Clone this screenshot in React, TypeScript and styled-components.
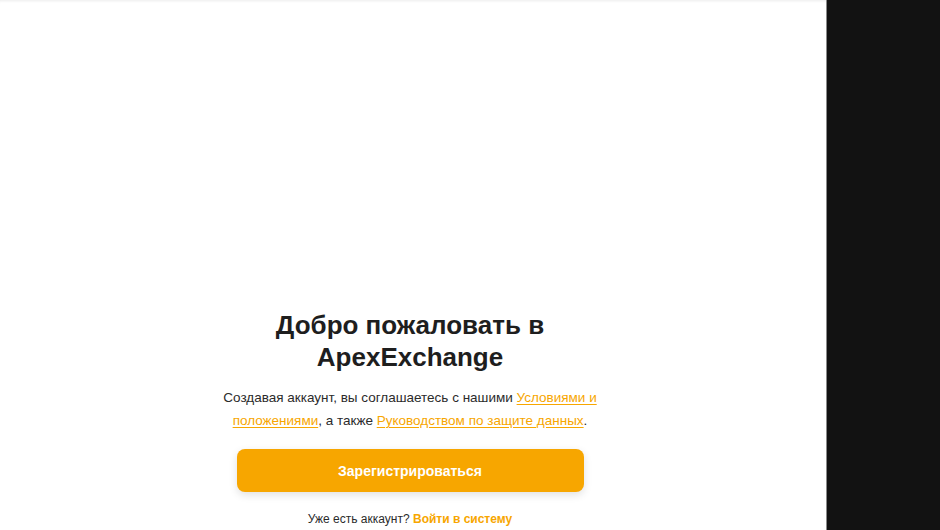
import React from 'react';
import styled, { createGlobalStyle } from 'styled-components';

const GlobalStyle = createGlobalStyle`
  html, body {
    margin: 0;
    padding: 0;
    height: 100%;
    background: #ffffff;
  }
  #root {
    height: 100%;
  }
  * {
    box-sizing: border-box;
  }
`;

const Page = styled.div`
  display: flex;
  width: 940px;
  height: 530px;
  overflow: hidden;
  font-family: "Liberation Sans", Arial, sans-serif;
`;

const Main = styled.div`
  flex: 0 0 826px;
  display: flex;
  flex-direction: column;
  align-items: center;
  padding: 309px 6px 0 0;
  background: #ffffff;
  box-shadow: inset 0 3px 3px -2px rgba(0, 0, 0, 0.08);
`;

const Side = styled.div`
  flex: 1;
  background: #121212;
  border-left: 1px solid #8a8a8a;
`;

const Content = styled.div`
  width: 384px;
  display: flex;
  flex-direction: column;
  align-items: center;
  text-align: center;
`;

const Title = styled.h1`
  margin: 0;
  font-size: 26px;
  line-height: 32px;
  font-weight: 700;
  color: #1e1e1e;
  width: 300px;
`;

const Terms = styled.p`
  margin: 13px 0 0;
  font-size: 13.5px;
  line-height: 23px;
  color: #2b2b2b;
`;

const TermsLink = styled.a`
  color: #f7a600;
  text-decoration: underline;
  text-underline-offset: 2px;
`;

const PrimaryButton = styled.button`
  margin-top: 17px;
  width: 347px;
  height: 43px;
  border: none;
  border-radius: 8px;
  background: #f7a600;
  color: #ffffff;
  font-family: inherit;
  font-size: 14px;
  font-weight: 700;
  box-shadow: 0 3px 8px rgba(0, 0, 0, 0.12);
  cursor: pointer;
`;

const Footer = styled.div`
  margin-top: 18px;
  font-size: 12px;
  line-height: 18px;
  color: #2b2b2b;
`;

const FooterLink = styled.a`
  color: #f7a600;
  font-weight: 700;
  text-decoration: none;
`;

export default function App() {
  return (
    <>
      <GlobalStyle />
      <Page>
        <Main>
          <Content>
            <Title>Добро пожаловать в ApexExchange</Title>
            <Terms>
              Создавая аккаунт, вы соглашаетесь с нашими{' '}
              <TermsLink href="#">Условиями и положениями</TermsLink>, а также{' '}
              <TermsLink href="#">Руководством по защите данных</TermsLink>.
            </Terms>
            <PrimaryButton>Зарегистрироваться</PrimaryButton>
            <Footer>
              Уже есть аккаунт? <FooterLink href="#">Войти в систему</FooterLink>
            </Footer>
          </Content>
        </Main>
        <Side />
      </Page>
    </>
  );
}
